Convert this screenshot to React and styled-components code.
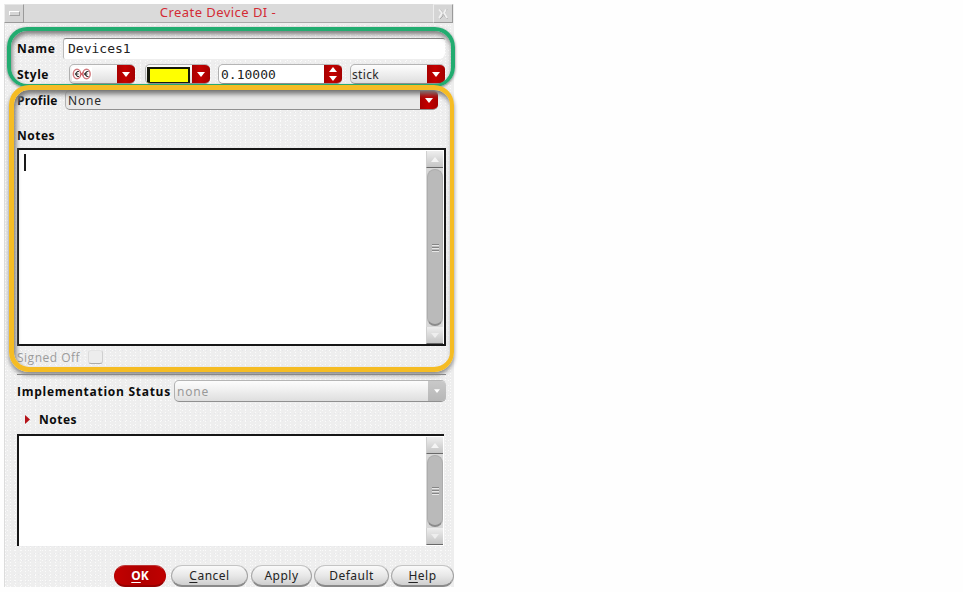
import React from "react";
import styled, { createGlobalStyle, css } from "styled-components";

const GlobalStyle = createGlobalStyle`
  * { box-sizing: border-box; }
  body { margin: 0; background: #fefefe; overflow: hidden; }
`;

const Dialog = styled.main`
  position: relative;
  width: 450px;
  height: 583px;
  margin: 4px 0 0 4px;
  background:
    conic-gradient(from 0deg at 1px 1px, transparent 75%, #fbfbfb 0) 0 0 / 5px 3px,
    conic-gradient(from 0deg at 1px 1px, transparent 75%, #fbfbfb 0) 2px 1px / 7px 5px,
    conic-gradient(from 0deg at 1px 1px, transparent 75%, #e7e7ea 0) 1px 3px / 4px 7px,
    #eeeeee;
  border-left: 1px solid #dcdcdc;
  font: 12px "Open Sans", "Noto Sans", sans-serif;
  color: #222;
  display: flex;
  flex-direction: column;
`;

const TitleBar = styled.header`
  display: flex;
  height: 19px;
  flex: none;
  margin: 0 1px 0 -1px;
  background: #dadada;
  border-bottom: 1px solid #a9a9a9;
`;

const Title = styled.h1`
  flex: 1;
  margin: 0;
  padding-right: 21px;
  font: 13px/17px "Noto Sans", sans-serif;
  letter-spacing: 0.45px;
  text-align: center;
  color: #d32b35;
`;

const TitleButton = styled.div`
  width: 20px;
  height: 19px;
  display: flex;
  align-items: center;
  justify-content: center;
  background: #d5d5d5;
  border: 1px solid;
  border-color: #e6e6e6 #9a9a9a #9a9a9a #eee;
`;

const MenuBar = styled.span`
  width: 11px;
  height: 5px;
  border: 1px solid;
  border-color: #fff #a2a2a2 #a2a2a2 #fff;
`;

const Row = styled.div`
  display: flex;
  align-items: center;
  flex: none;
  height: ${(p) => p.$height}px;
  margin-top: ${(p) => p.$gap}px;
  padding-left: 12px;
`;

const Label = styled.span`
  width: ${(p) => p.$width}px;
  flex: none;
  white-space: nowrap;
  font-weight: ${(p) => (p.$muted ? 400 : 700)};
  font-size: 12px;
  letter-spacing: ${(p) => p.$spacing ?? 0.5}px;
  color: ${(p) => (p.$muted ? "#9b9b9b" : "#0c0c0c")};
`;

const mono = css`
  font: 13px "DejaVu Sans Mono", monospace;
  color: #222;
`;

const NameInput = styled.div`
  ${mono}
  width: 382px;
  height: 21px;
  padding: 2px 4px;
  background: #fff;
  border-top: 1px solid #858585;
  border-left: 1px solid #bbb;
  border-radius: 3px 2px 6px 2px;
`;

const Combo = styled.div`
  display: flex;
  align-items: stretch;
  width: ${(p) => p.$width}px;
  height: ${(p) => p.$height ?? 20}px;
  margin-right: ${(p) => p.$after ?? 0}px;
  flex: none;
  overflow: hidden;
  border: 1px solid;
  border-color: #b5b5b5 #aaa #909090 #b0b0b0;
  border-right-width: 0;
  border-radius: 5px;
  background: ${(p) =>
    p.$plain ? "#fff" : p.$flat ? "#e9e9e9" : "linear-gradient(#fdfdfd, #f0f0f0 45%, #dedede)"};
`;

const ComboValue = styled.div`
  flex: 1;
  display: flex;
  align-items: center;
  padding-left: ${(p) => p.$inset ?? 2}px;
  font-family: "Noto Sans", sans-serif;
  font-size: 12px;
  letter-spacing: ${(p) => p.$spacing ?? 0}px;
  color: ${(p) => (p.$muted ? "#999" : "#292929")};
`;

const NumberValue = styled(ComboValue)`
  ${mono}
`;

const DropButton = styled.div`
  width: 18px;
  display: flex;
  align-items: center;
  justify-content: center;
  background: ${(p) =>
    p.$muted ? "linear-gradient(#c9c9c9, #b7b7b7)" : "linear-gradient(90deg, #a80000, #c40000 45%, #a40000)"};
`;

const Swatch = styled.div`
  width: 43px;
  height: 17px;
  margin-top: 2px;
  background: #ffff00;
  border: 2px solid #15180a;
  border-left-width: 3px;
`;

const Editor = styled.div`
  display: flex;
  justify-content: space-between;
  flex: none;
  width: ${(p) => (p.$open ? 427 : 429)}px;
  height: ${(p) => p.$height}px;
  margin: ${(p) => p.$gap}px 0 0 12px;
  padding: ${(p) => (p.$open ? "1px 1px 1px 0" : "1px 1px 0 0")};
  background: #fff;
  border: 2px solid #171717;
  ${(p) => p.$open && "border-right: 0; border-bottom: 0;"}
`;

const Caret = styled.div`
  width: 1.5px;
  height: 17px;
  margin: 3px 0 0 5px;
  background: #1b1b1b;
`;

const Scrollbar = styled.div`
  width: 17px;
  margin-left: auto;
  display: flex;
  flex-direction: column;
  background: #d8d8d8;
`;

const ScrollEnd = styled.div`
  height: 17px;
  flex: none;
  display: flex;
  align-items: center;
  justify-content: center;
  background: linear-gradient(#eee, #c5c5c5);
  border-left: 1px solid #d0d0d0;
  border-bottom: 1px solid #686868;
`;

const Thumb = styled.div`
  flex: 1;
  display: flex;
  flex-direction: column;
  align-items: center;
  justify-content: center;
  gap: 2px;
  margin: 1px 0 1px 1px;
  background: #bababa;
  border: 1px solid #adadad;
  border-bottom: 2px solid #8b8b8b;
  border-radius: 8px;
`;

const Grip = styled.i`
  width: 7px;
  height: 1px;
  background: #858585;
  box-shadow: 0 1px #e7e7e7;
`;

const Checkbox = styled.div`
  width: 15px;
  height: 14px;
  background: #ededed;
  border: 1px solid;
  border-color: #e4e4e4 #cfcfcf #ababab #dcdcdc;
  border-radius: 3px;
`;

const Divider = styled.div`
  flex: none;
  height: 1px;
  width: 429px;
  margin: 9px 0 0 12px;
  background: #858585;
`;

const Disclosure = styled.div`
  display: flex;
  width: 14px;
  margin-left: 8px;
`;

const Actions = styled.footer`
  display: flex;
  height: 22px;
  margin: 19px 0 0 109px;
  flex: none;
`;

const Button = styled.button`
  width: ${(p) => p.$width}px;
  height: 22px;
  margin: 0 ${(p) => p.$after}px 0 0;
  padding: 0;
  flex: none;
  font: 12px/18px "Noto Sans", sans-serif;
  letter-spacing: ${(p) => p.$spacing ?? 0.5}px;
  color: #232323;
  background: linear-gradient(#fafafa, #e8e8e8 50%, #cfcfcf);
  border: 1px solid;
  border-color: #c4c4c4 #a2a2a2 #8a8a8a #aaa;
  border-bottom-width: 2px;
  border-radius: 11px;
  ${(p) =>
    p.$primary &&
    css`
      background: linear-gradient(90deg, #c20000, #b00000 50%, #c00000);
      border-color: #bd3636 #b40000 #970000;
      color: #fff;
      font-weight: 700;
    `}
`;

const Mnemonic = styled.span`
  text-decoration: underline;
  text-decoration-thickness: 1px;
  text-underline-offset: 2px;
  text-decoration-skip-ink: none;
`;

const Highlight = styled.div`
  position: absolute;
  pointer-events: none;
  border-radius: 20px;
`;

const GreenHighlight = styled(Highlight)`
  left: 2px;
  top: 23px;
  width: 448px;
  height: 60px;
  border: 4px solid #22ac70;
  border-bottom-width: 3px;
  box-shadow: 0 1px 3px #777, inset 1px 3px 5px #777;
`;

const GoldHighlight = styled(Highlight)`
  left: 4px;
  top: 81px;
  width: 445px;
  height: 287px;
  border: 5px solid #f5bc24;
  border-right-width: 4px;
  box-shadow: 0 3px 4px #8b8b8b, inset 2px 4px 5px #777;
`;

const Arrow = ({ up, size = 8, color = "#fff" }) => (
  <svg width={size} height={size / 2 + 1} viewBox="0 0 8 5">
    <path d={up ? "M0 5h8L4 0z" : "M0 0h8L4 5z"} fill={color} />
  </svg>
);

const StyleGlyph = () => (
  <svg width="20" height="14" viewBox="0 0 20 14" fill="none">
    <path fill="#fff" d="M0 0h20v14H0z" />
    <ellipse cx="5" cy="7" rx="3.7" ry="4.7" stroke="#d27b80" strokeWidth="1.5" />
    <ellipse cx="14.5" cy="7" rx="3.7" ry="4.7" stroke="#d27b80" strokeWidth="1.5" />
    <path d="M7 4.5H5.5L3.5 7l2 2.5H7M16.5 4.5H15L12.5 7 15 9.5h1.5M3 7h3.5M12 7h3.5" stroke="#343434" strokeWidth="1.2" />
    <path d="m8 5 3.5 4M11.5 5 8 9" stroke="#ce5860" />
  </svg>
);

const CloseGlyph = () => (
  <svg width="12" height="12" viewBox="0 0 12 12" fill="none">
    <path d="M3 1.5 6 5v3l-3 3M10 1.5 7.5 5v3l3 3" stroke="#aaa" />
    <path d="M2 1.5 5 5 2 10M9 1.5 7 5l3 5" stroke="#f2f2f2" strokeWidth="1.6" />
  </svg>
);

const Drop = ({ muted }) => (
  <DropButton $muted={muted}><Arrow size={muted ? 6 : 8} /></DropButton>
);

const Scroller = () => (
  <Scrollbar>
    <ScrollEnd><Arrow up color="#f4f4f4" /></ScrollEnd>
    <Thumb><Grip /><Grip /><Grip /></Thumb>
    <ScrollEnd><Arrow color="#eeeeee" /></ScrollEnd>
  </Scrollbar>
);

const Spin = styled(DropButton)`
  flex-direction: column;
  gap: 4px;
`;

export default function App() {
  return (
    <>
      <GlobalStyle />
      <Dialog>
        <TitleBar>
          <TitleButton><MenuBar /></TitleButton>
          <Title>Create Device DI -</Title>
          <TitleButton><CloseGlyph /></TitleButton>
        </TitleBar>

        <Row $height={21} $gap={15}>
          <Label $width={46} $spacing={0.65}>Name</Label>
          <NameInput>Devices1</NameInput>
        </Row>
        <Row $height={20} $gap={5}>
          <Label $width={52}>Style</Label>
          <Combo $width={66} $after={10}>
            <ComboValue><StyleGlyph /></ComboValue>
            <Drop />
          </Combo>
          <Combo $width={65} $after={8}>
            <ComboValue $inset={1}><Swatch /></ComboValue>
            <Drop />
          </Combo>
          <Combo $width={124} $after={8} $plain>
            <NumberValue>0.10000</NumberValue>
            <Spin><Arrow up /><Arrow /></Spin>
          </Combo>
          <Combo $width={95}>
            <ComboValue $inset={1} $spacing={0.35}>stick</ComboValue>
            <Drop />
          </Combo>
        </Row>
        <Row $height={20} $gap={6}>
          <Label $width={48} $spacing={0.15}>Profile</Label>
          <Combo $width={373} $flat>
            <ComboValue $spacing={0.8}>None</ComboValue>
            <Drop />
          </Combo>
        </Row>
        <Row $height={20} $gap={15}>
          <Label>Notes</Label>
        </Row>
        <Editor $height={198} $gap={3}>
          <Caret />
          <Scroller />
        </Editor>
        <Row $height={16} $gap={3}>
          <Label $width={71} $muted>Signed Off</Label>
          <Checkbox />
        </Row>
        <Divider />

        <Row $height={22} $gap={5}>
          <Label $width={157} $spacing={0.72}>Implementation Status</Label>
          <Combo $width={272} $height={22}>
            <ComboValue $muted $spacing={0.8}>none</ComboValue>
            <Drop muted />
          </Combo>
        </Row>
        <Row $height={20} $gap={7}>
          <Disclosure>
            <svg width="5" height="9" viewBox="0 0 5 9"><path d="m0 0 5 4.5L0 9z" fill="#b51219" /></svg>
          </Disclosure>
          <Label>Notes</Label>
        </Row>
        <Editor $height={112} $gap={5} $open>
          <Scroller />
        </Editor>

        <Actions>
          <Button $width={52} $after={5} $primary $spacing={0}><Mnemonic>O</Mnemonic>K</Button>
          <Button $width={77} $after={3}><Mnemonic>C</Mnemonic>ancel</Button>
          <Button $width={61} $after={2}>Apply</Button>
          <Button $width={75} $after={2}>Default</Button>
          <Button $width={63} $after={0}><Mnemonic>H</Mnemonic>elp</Button>
        </Actions>

        <GreenHighlight />
        <GoldHighlight />
      </Dialog>
    </>
  );
}
